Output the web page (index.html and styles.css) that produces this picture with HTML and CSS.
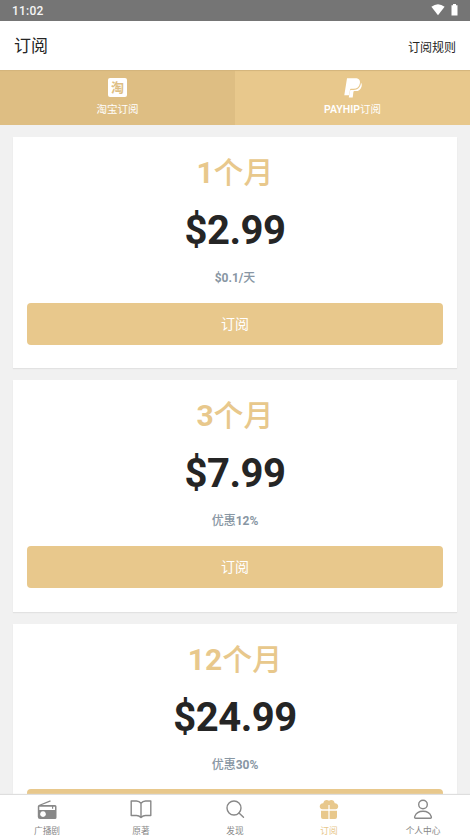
FILE: index.html
```html
<!DOCTYPE html>
<html lang="zh-CN">
<head>
<meta charset="utf-8">
<title>订阅</title>
<link rel="stylesheet" href="styles.css">
</head>
<body>
<div class="app">
  <div class="status">
    <span>11:02</span>
    <div class="status-icons">
      <svg width="14" height="12" viewBox="0 0 14 12"><path d="M.4 2.8Q7-2.200 13.600 2.800L7 11.200z" fill="#fff"/></svg>
      <svg width="7" height="12" viewBox="0 0 7 12"><path d="M2 0h3v1.300h1.500V11.500H.5V1.300H2z" fill="#fff"/></svg>
    </div>
  </div>
  <header class="header"><h1>订阅</h1><span class="rules">订阅规则</span></header>
  <div class="tabs">
    <div class="tab active">
      <span class="tao">淘</span>
      <span>淘宝订阅</span>
    </div>
    <div class="tab">
      <svg class="tab-icon" width="20" height="20" viewBox="0 0 20 20"><path d="M4 .3h8.200c3.500 0 5.200 1.900 4.700 4.900-.6 3.700-3 5.600-6.500 5.600H8.300c-.9 0-1.200.4-1.300 1.200L6.100 17.300H1.300z" fill="#fff"/><path d="M17.900 4.500c1 1.100 1 2.600.7 3.900-.8 3.200-2.900 4.700-5.900 4.700h-1.300c-.6 0-.9.3-1 .9l-.7 5.400H5.800l1.100-6.500c.1-.7.500-1 1.100-1h2.700c3.800 0 6.500-2.200 7.200-6.300z" fill="#fff"/></svg>
      <span><b>PAYHIP</b>订阅</span>
    </div>
  </div>
  <main class="plans">
    <section class="card"><h2><b>1</b>个月</h2><div class="price">$2.99</div><div class="note"><b>$0.1/</b>天</div><div class="button">订阅</div></section>
    <section class="card"><h2><b>3</b>个月</h2><div class="price">$7.99</div><div class="note">优惠<b>12%</b></div><div class="button">订阅</div></section>
    <section class="card"><h2><b>12</b>个月</h2><div class="price">$24.99</div><div class="note">优惠<b>30%</b></div><div class="button"></div></section>
  </main>
  <nav class="nav">
    <div class="item">
      <svg width="22" height="22" viewBox="0 0 22 22"><path d="M3 6.500L14.500 1.800" fill="none" stroke="#888" stroke-width="1.300"/><path fill-rule="evenodd" fill="#888" d="M3 6h16q1.500 0 1.500 1.500v11q0 1.500-1.500 1.500H4q-2.200 0-2.200-2.200V7.500Q1.800 6 3 6zM3.300 7.700v3.200h15.700V7.700h-1.800v2.100H16V7.700zM7 12.200a2.900 2.900 0 1 0 .01 0z"/></svg>
      <span>广播剧</span>
    </div>
    <div class="item">
      <svg width="22" height="22" viewBox="0 0 22 22"><path d="M11 4.300Q9.200 2 6.500 2H1.200v14.500h5.300q2.500 0 4.500 2 2-2 4.500-2h5.300V2h-5.300Q12.800 2 11 4.300zV18" fill="none" stroke="#888" stroke-width="1.400" stroke-linejoin="round"/></svg>
      <span>原著</span>
    </div>
    <div class="item">
      <svg width="22" height="22" viewBox="0 0 22 22"><g fill="none" stroke="#888" stroke-width="1.400" stroke-linecap="round"><circle cx="10" cy="9" r="7"/><path d="M15 14l4.500 4.300"/></g></svg>
      <span>发现</span>
    </div>
    <div class="item selected">
      <svg width="22" height="22" viewBox="0 0 22 22"><path fill="#e8c88c" d="M11 1.800C13 0 16.500 1 16.700 4.300 21 4 21.500 10.200 17.500 10.200H11.600V6h-1.200v4.200H4.500C.5 10.200 1 4 5.300 4.300 5.500 1 9 0 11 1.800zM3 11.700h7.400V20H5q-2 0-2-2zM11.600 11.700H19V18q0 2-2 2h-5.400z"/></svg>
      <span>订阅</span>
    </div>
    <div class="item">
      <svg width="22" height="22" viewBox="0 0 22 22"><g fill="none" stroke="#888" stroke-width="1.400"><circle cx="11" cy="5.500" r="4.300"/><path d="M3.700 19.200q-1.500 0-.9-1.800C4 14 7 12.300 11 12.300s7 1.700 8.200 5.100q.6 1.800-.9 1.800z"/></g></svg>
      <span>个人中心</span>
    </div>
  </nav>
</div>
</body>
</html>
```
FILE: styles.css
```css
* { box-sizing: border-box; }
body { margin: 0; font-family: Roboto, "Noto Sans CJK SC", sans-serif; background: #f1f1f1; color: #252525; }
h1, h2 { margin: 0; font-weight: 400; }
svg { display: block; }
.app { height: 837px; display: flex; flex-direction: column; overflow: hidden; }
.status { height: 21px; flex: none; background: #757575; color: #f5f5f5; display: flex; justify-content: space-between; align-items: center; padding: 0 12px; font-size: 12px; font-weight: 500; letter-spacing: .2px; }
.status-icons { display: flex; gap: 6px; padding-bottom: 2px; }
.header { height: 49px; flex: none; background: #fff; display: flex; align-items: center; justify-content: space-between; padding: 2px 14px 0; }
.header h1 { font-size: 17px; line-height: 25px; }
.rules { font-size: 12px; }
.tabs { height: 55px; flex: none; display: flex; background: #e8c88c; color: #fff; }
.tab { flex: 1; display: flex; flex-direction: column; align-items: center; padding-top: 8px; font-size: 10.5px; line-height: 15px; gap: 4px; box-shadow: inset 0 2px 1px -1px #d3b47c; }
.tab b { font-weight: 600; }
.tab.active { background: #debe83; }
.tab-icon { height: 20px; }
.tao { width: 19px; height: 19px; margin-bottom: 1px; border-radius: 2px; background: #fff; color: #debe83; font-size: 13px; line-height: 19px; text-align: center; font-weight: 700; }
.plans { flex: 1; min-height: 0; overflow: hidden; padding: 12px 13px 0; display: flex; flex-direction: column; gap: 12px; }
.card { flex: none; height: 231.3px; background: #fff; box-shadow: 0 1px 1px #e2e2e2; padding: 13px 14px 0; text-align: center; }
.card h2 { font-size: 30px; line-height: 45px; font-weight: 500; color: #e8c88c; }
.card b { font-weight: 700; }
.price { font-size: 40px; line-height: 48px; margin-top: 12px; font-weight: 700; letter-spacing: -.5px; }
.note { font-size: 12px; line-height: 18px; margin-top: 14px; font-weight: 500; color: #8896a3; }
.button { margin-top: 15.500px; height: 42.500px; border-radius: 4px; background: #e8c88c; color: #fff; font-size: 14px; line-height: 43px; }
.nav { height: 42px; flex: none; background: #fff; box-shadow: 0 -1px 1px #dedede; z-index: 1; display: flex; color: #888; font-size: 8.700px; }
.item { flex: 1; display: flex; flex-direction: column; align-items: center; padding-top: 4px; gap: 4px; line-height: 13px; }
.item svg { flex: none; }
.selected { color: #e8c88c; }
```
